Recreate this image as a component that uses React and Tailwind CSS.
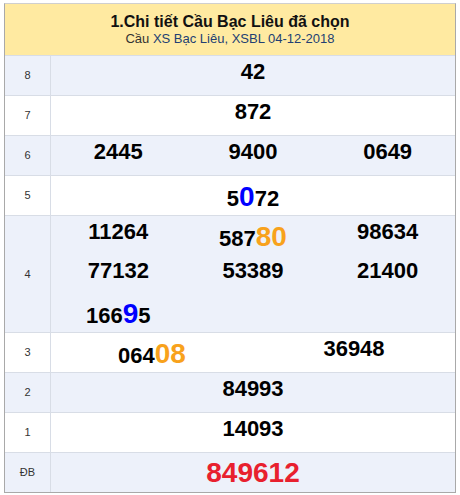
const rows = [
  { label: '8', bg: 'blue', cells: [[{ t: '42' }]], cols: 1 },
  { label: '7', bg: 'white', cells: [[{ t: '872' }]], cols: 1 },
  { label: '6', bg: 'blue', cells: [[{ t: '2445' }], [{ t: '9400' }], [{ t: '0649' }]], cols: 3 },
  { label: '5', bg: 'white', cells: [[{ t: '5' }, { t: '0', c: 'blue' }, { t: '72' }]], cols: 1 },
  {
    label: '4',
    bg: 'blue',
    cols: 3,
    cells: [
      [{ t: '11264' }],
      [{ t: '587' }, { t: '80', c: 'orange' }],
      [{ t: '98634' }],
      [{ t: '77132' }],
      [{ t: '53389' }],
      [{ t: '21400' }],
      [{ t: '166' }, { t: '9', c: 'blue' }, { t: '5' }],
    ],
  },
  { label: '3', bg: 'white', cols: 2, cells: [[{ t: '064' }, { t: '08', c: 'orange' }], [{ t: '36948' }]] },
  { label: '2', bg: 'blue', cells: [[{ t: '84993' }]], cols: 1 },
  { label: '1', bg: 'white', cells: [[{ t: '14093' }]], cols: 1 },
];

const widths = { 1: 'w-full', 2: 'w-1/2', 3: 'w-1/3' };

function Cell({ parts, cols }) {
  const big = parts.some((p) => p.c);
  return (
    <div
      className={`${widths[cols]} text-center text-[22px] font-bold leading-[27px] text-black ${
        big ? 'h-[39px] pt-[7px]' : 'h-[38px] pt-[2px]'
      }`}
    >
      {parts.map((p, i) =>
        p.c ? (
          <span
            key={i}
            className={`text-[28px] ${p.c === 'blue' ? 'text-[#0000ff]' : 'text-[#f8a21c]'}`}
          >
            {p.t}
          </span>
        ) : (
          <span key={i}>{p.t}</span>
        )
      )}
    </div>
  );
}

function Row({ label, bg, children }) {
  return (
    <div className={`flex border-t border-[#d8dde6] ${bg === 'blue' ? 'bg-[#edf1fa]' : 'bg-white'}`}>
      <div className="w-[46px] shrink-0 border-r border-[#d8dde6] flex items-center justify-center text-[11px] text-[#333]">
        {label}
      </div>
      <div className="flex-1 flex flex-wrap items-start content-start min-h-[39px]">{children}</div>
    </div>
  );
}

export default function App() {
  return (
    <div className="w-[460px] h-[495px] bg-white pt-[3px] pl-[4px]" style={{ fontFamily: '"Liberation Sans", Arial, sans-serif' }}>
      <div className="w-[452px] border border-[#a9a9a9] border-t-[#cfcfcf]">
        <div className="h-[51px] bg-[#ffeaa1] pt-[8px] text-center">
          <div className="text-[16px] font-bold leading-[20px] text-[#111]">1.Chi tiết Cầu Bạc Liêu đã chọn</div>
          <div className="text-[13px] leading-[14px] text-[#333]">
            Cầu <span className="text-[#223f73]">XS Bạc Liêu, XSBL 04-12-2018</span>
          </div>
        </div>
        {rows.map((r) => (
          <Row key={r.label} label={r.label} bg={r.bg}>
            {r.cells.map((parts, i) => (
              <Cell key={i} parts={parts} cols={r.cols} />
            ))}
          </Row>
        ))}
        <Row label="ĐB" bg="blue">
          <div className="w-full text-center text-[28px] font-bold leading-[27px] pt-[6px] h-[39px] text-[#e8202e]">
            849612
          </div>
        </Row>
      </div>
    </div>
  );
}
